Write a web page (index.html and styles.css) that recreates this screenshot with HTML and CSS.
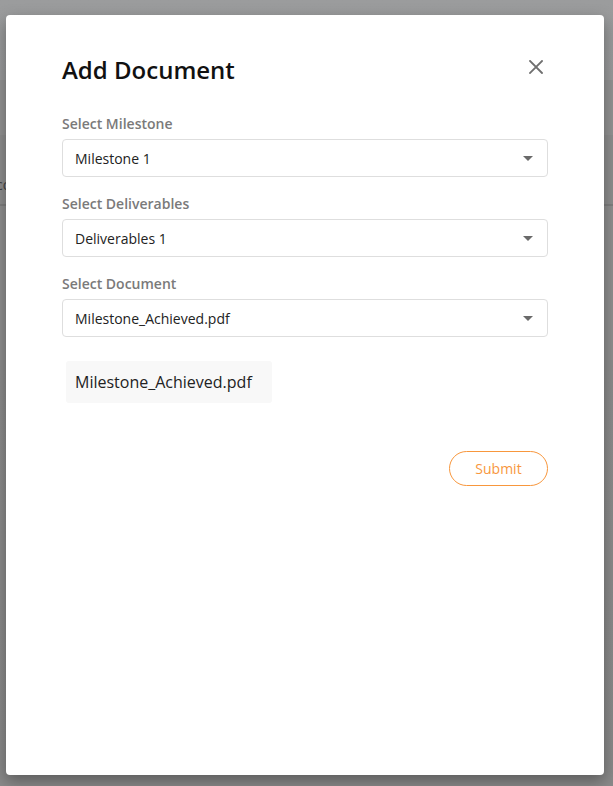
FILE: index.html
```html
<!DOCTYPE html>
<html lang="en">
<head>
<meta charset="utf-8">
<title>Add Document</title>
<link rel="stylesheet" href="styles.css">
</head>
<body>
<div class="backdrop-text">co</div>
<div class="modal">
  <div class="modal-header">
    <h1 class="modal-title">Add Document</h1>
    <button class="close-btn" aria-label="Close">
      <svg width="14" height="14" viewBox="0 0 14 14"><path d="M1 1L13 13M13 1L1 13" stroke="#6f6f6f" stroke-width="1.8" stroke-linecap="square"/></svg>
    </button>
  </div>
  <div class="field">
    <label class="field-label">Select Milestone</label>
    <div class="select"><span>Milestone 1</span><span class="caret"></span></div>
  </div>
  <div class="field">
    <label class="field-label">Select Deliverables</label>
    <div class="select"><span>Deliverables 1</span><span class="caret"></span></div>
  </div>
  <div class="field">
    <label class="field-label">Select Document</label>
    <div class="select"><span>Milestone_Achieved.pdf</span><span class="caret"></span></div>
  </div>
  <div class="chip-row">
    <div class="chip">Milestone_Achieved.pdf</div>
  </div>
  <div class="actions">
    <button class="submit-btn">Submit</button>
  </div>
</div>
</body>
</html>
```

FILE: styles.css
```css
* { box-sizing: border-box; }
html, body { margin: 0; padding: 0; }
body {
  width: 613px;
  height: 786px;
  overflow: hidden;
  font-family: "Open Sans", "Noto Sans", sans-serif;
  background:
    linear-gradient(to bottom,
      #9b9c9d 0, #999a9b 80px,
      #939393 80px, #939393 135px,
      #8e8e8e 135px, #8e8e8e 204px,
      #7f7f7f 204px, #7f7f7f 206px,
      #8f8f8f 206px, #8f8f8f 360px,
      #8c8c8c 360px, #8a8a8a 786px);
  padding-top: 15px;
  padding-left: 6px;
  position: relative;
}
.backdrop-text {
  position: absolute;
  left: -4px;
  top: 175px;
  font-size: 14px;
  color: #444;
}
.modal {
  position: relative;
  width: 598px;
  height: 760px;
  background: #fff;
  border-radius: 4px;
  box-shadow: 0 6px 16px rgba(0,0,0,0.35);
  padding: 38px 56px 0 56px;
}
.modal-header {
  display: flex;
  justify-content: space-between;
  align-items: flex-start;
  margin-bottom: 28px;
}
.modal-title {
  margin: 1px 0 -1px 0;
  font-size: 24px;
  line-height: 32px;
  font-weight: 600;
  color: #111;
}
.close-btn {
  border: 0;
  background: none;
  padding: 0;
  margin: 7px 5px 0 0;
  width: 14px;
  height: 14px;
  display: block;
  cursor: pointer;
}
.close-btn svg { display: block; }
.field { margin-bottom: 16px; }
.field-label {
  display: block;
  font-size: 14px;
  line-height: 20px;
  font-weight: 600;
  color: #7a7a7a;
  padding-top: 1px;
  margin-bottom: 5px;
}
.select {
  height: 38px;
  border: 1px solid #dedede;
  border-radius: 4px;
  display: flex;
  align-items: center;
  justify-content: space-between;
  padding: 0 14px 0 12px;
  font-size: 14px;
  color: #222;
}
.caret {
  width: 0;
  height: 0;
  border-left: 5px solid transparent;
  border-right: 5px solid transparent;
  border-top: 5px solid #6a6a6a;
}
.chip-row {
  display: flex;
  padding-left: 4px;
  margin-top: 24px;
}
.chip {
  height: 42px;
  display: flex;
  align-items: center;
  padding: 0 20px 0 9px;
  background: #f8f8f8;
  border-radius: 3px;
  font-size: 16px;
  color: #222;
}
.actions {
  display: flex;
  justify-content: flex-end;
  margin-top: 48px;
}
.submit-btn {
  width: 99px;
  height: 35px;
  border: 1px solid #f8973d;
  border-radius: 18px;
  background: #fff;
  color: #f8973d;
  font-family: "Open Sans", "Noto Sans", sans-serif;
  font-size: 14px;
  padding: 0;
  cursor: pointer;
}
```
